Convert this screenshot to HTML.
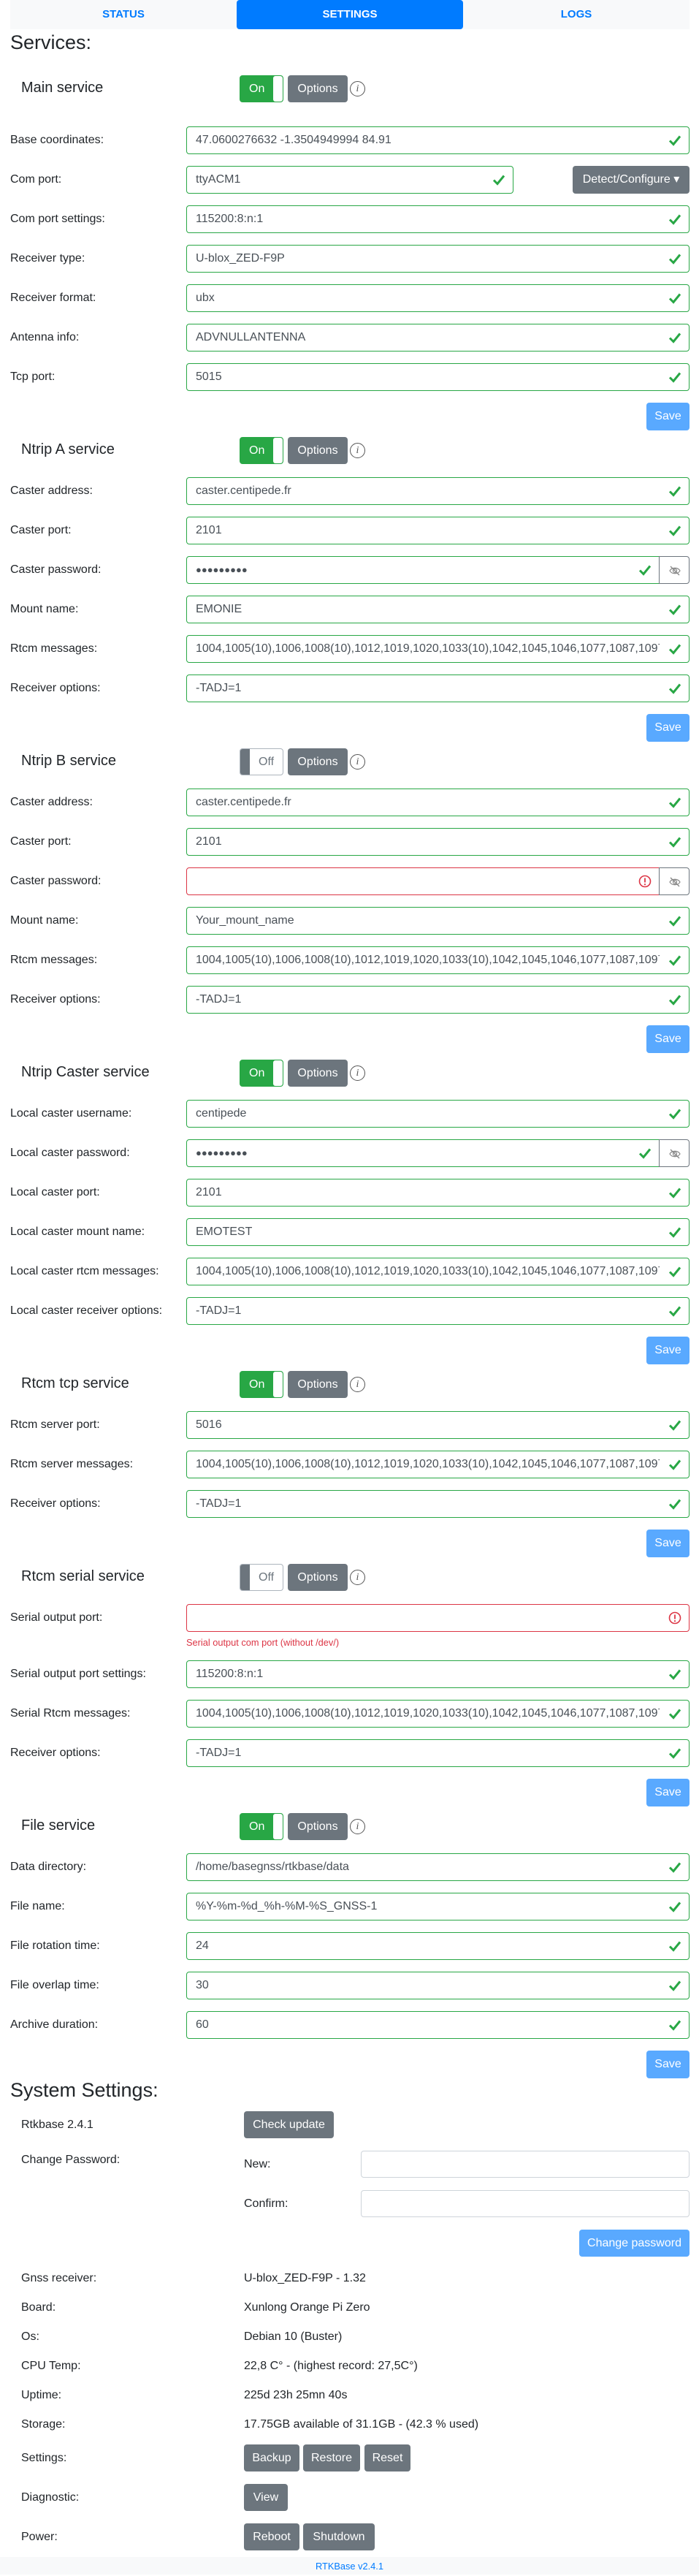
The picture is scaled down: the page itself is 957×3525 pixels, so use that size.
<!DOCTYPE html>
<html><head><meta charset="utf-8">
<style>
*{box-sizing:border-box;margin:0;padding:0}
body{width:957px;height:3523px;position:relative;background:#fff;font-family:"Liberation Sans",sans-serif;color:#212529;font-size:16px;overflow:hidden}
.nav{position:absolute;left:14px;top:0;width:930px;height:40px;background:#f8f9fa}
.tab{position:absolute;top:0;height:40px;width:310px;text-align:center;line-height:40px;font-weight:bold;font-size:15px;color:#007bff}
.tab.act{background:#007bff;color:#fff;border-radius:4px}
h3{position:absolute;left:14px;font-size:27px;font-weight:normal;line-height:32px}
.sec{position:absolute;left:0;width:957px}
.hdr{position:relative;height:37px;margin-bottom:18px}
.hdr .t{position:absolute;left:29px;top:0;line-height:34px;font-size:20px}
.tg{position:absolute;left:328px;top:0;width:60px;height:37px;border-radius:4px;overflow:hidden}
.tg.on{background:#28a745;border:1px solid #28a745}
.tg.on span{position:absolute;left:12px;top:0;line-height:35px;color:#fff}
.tg.on i{position:absolute;right:0;top:0;width:13px;height:35px;background:#fff;border-radius:3px}
.tg.off{background:#fff;border:1px solid #adb5bd}
.tg.off i{position:absolute;left:0;top:0;width:13px;height:35px;background:#6c757d}
.tg.off span{position:absolute;left:25px;top:0;line-height:35px;color:#6c757d}
.opt{position:absolute;left:394px;top:0;width:82px;height:37px;background:#6c757d;color:#fff;border-radius:4px;text-align:center;line-height:37px}
.inf{position:absolute;left:479px;top:8px;width:21px;height:21px;border:1.3px solid #555;border-radius:50%;text-align:center;font:italic 14px/19px "Liberation Serif",serif;color:#555}
.row{position:relative;height:38px;margin-bottom:16px}
.row label{position:absolute;left:14px;top:0;line-height:38px;white-space:nowrap}
.in{position:absolute;left:255px;top:0;width:689px;height:38px;border:1px solid #28a745;border-radius:4px;padding:0 40px 0 12px;line-height:36px;color:#495057;white-space:nowrap}
.in b{display:block;font-weight:normal;overflow:hidden;white-space:nowrap}
.in.bad{border-color:#dc3545}
.ck{position:absolute;right:10px;top:10px;width:18px;height:16px}
.pw{width:648px;border-radius:4px 0 0 4px}
.eye{position:absolute;left:902px;top:0;width:42px;height:38px;border:1px solid #6c757d;border-radius:0 4px 4px 0}
.eye svg{position:absolute;left:13px;top:11px}
.sv{position:relative;margin-left:885px;width:59px;height:38px;background:#59a9ff;color:#fff;border-radius:4px;text-align:center;line-height:38px}
.err{position:absolute;left:255px;font-size:12.8px;color:#dc3545}
.sl{position:absolute;left:29px;line-height:20px}
.sv2{position:absolute;left:334px;line-height:20px}
.btn{position:absolute;height:37px;background:#6c757d;color:#fff;border-radius:4px;text-align:center;line-height:37px}
.pin{position:absolute;left:494px;width:450px;height:37px;border:1px solid #ced4da;border-radius:4px}
.dots{letter-spacing:0;font-size:13px;color:#495057}
</style></head><body>
<svg width="0" height="0" style="position:absolute"><defs>
<symbol id="ck" viewBox="0 0 18 16"><path d="M2 8.5 L7 13.5 L16 2.5" fill="none" stroke="#28a745" stroke-width="3"/></symbol>
<symbol id="ex" viewBox="0 0 18 18"><circle cx="9" cy="9" r="7.5" fill="none" stroke="#dc3545" stroke-width="1.6"/><path d="M9 4.5 V10.5" stroke="#dc3545" stroke-width="1.8"/><circle cx="9" cy="13.2" r="1.1" fill="#dc3545"/></symbol>
<symbol id="eye" viewBox="0 0 16 16"><path d="M1 8 C4 3 12 3 15 8 C12 13 4 13 1 8Z" fill="none" stroke="#888" stroke-width="1.2"/><circle cx="8" cy="8" r="2.5" fill="none" stroke="#888" stroke-width="1.2"/><path d="M2 2 L14 14" stroke="#888" stroke-width="1.3"/></symbol>
</defs></svg>

<div class="nav">
<div class="tab" style="left:0">STATUS</div>
<div class="tab act" style="left:310px">SETTINGS</div>
<div class="tab" style="left:620px">LOGS</div>
</div>
<h3 style="top:42px">Services:</h3>

<div class="sec" style="top:103px">
<div class="hdr" style="margin-bottom:33px"><div class="t">Main service</div><div class="tg on"><span>On</span><i></i></div><div class="opt">Options</div><div class="inf">i</div></div>
<div class="row"><label>Base coordinates:</label><div class="in">47.0600276632 -1.3504949994 84.91<svg class="ck"><use href="#ck"/></svg></div></div>
<div class="row"><label>Com port:</label><div class="in" style="width:448px">ttyACM1<svg class="ck"><use href="#ck"/></svg></div><div class="btn" style="left:784px;width:160px;height:38px;line-height:38px">Detect/Configure ▾</div></div>
<div class="row"><label>Com port settings:</label><div class="in">115200:8:n:1<svg class="ck"><use href="#ck"/></svg></div></div>
<div class="row"><label>Receiver type:</label><div class="in">U-blox_ZED-F9P<svg class="ck"><use href="#ck"/></svg></div></div>
<div class="row"><label>Receiver format:</label><div class="in">ubx<svg class="ck"><use href="#ck"/></svg></div></div>
<div class="row"><label>Antenna info:</label><div class="in">ADVNULLANTENNA<svg class="ck"><use href="#ck"/></svg></div></div>
<div class="row"><label>Tcp port:</label><div class="in">5015<svg class="ck"><use href="#ck"/></svg></div></div>
<div class="sv">Save</div>
</div>

<div class="sec" style="top:598px">
<div class="hdr"><div class="t">Ntrip A service</div><div class="tg on"><span>On</span><i></i></div><div class="opt">Options</div><div class="inf">i</div></div>
<div class="row"><label>Caster address:</label><div class="in">caster.centipede.fr<svg class="ck"><use href="#ck"/></svg></div></div>
<div class="row"><label>Caster port:</label><div class="in">2101<svg class="ck"><use href="#ck"/></svg></div></div>
<div class="row"><label>Caster password:</label><div class="in pw"><span class="dots">●●●●●●●●●</span><svg class="ck"><use href="#ck"/></svg></div><div class="eye"><svg width="16" height="16"><use href="#eye"/></svg></div></div>
<div class="row"><label>Mount name:</label><div class="in">EMONIE<svg class="ck"><use href="#ck"/></svg></div></div>
<div class="row"><label>Rtcm messages:</label><div class="in"><b>1004,1005(10),1006,1008(10),1012,1019,1020,1033(10),1042,1045,1046,1077,1087,1097,1107,1127,1230</b><svg class="ck"><use href="#ck"/></svg></div></div>
<div class="row"><label>Receiver options:</label><div class="in">-TADJ=1<svg class="ck"><use href="#ck"/></svg></div></div>
<div class="sv">Save</div>
</div>

<div class="sec" style="top:1024px">
<div class="hdr"><div class="t">Ntrip B service</div><div class="tg off"><i></i><span>Off</span></div><div class="opt">Options</div><div class="inf">i</div></div>
<div class="row"><label>Caster address:</label><div class="in">caster.centipede.fr<svg class="ck"><use href="#ck"/></svg></div></div>
<div class="row"><label>Caster port:</label><div class="in">2101<svg class="ck"><use href="#ck"/></svg></div></div>
<div class="row"><label>Caster password:</label><div class="in pw bad"><svg class="ck" style="width:18px;height:18px;top:9px"><use href="#ex"/></svg></div><div class="eye"><svg width="16" height="16"><use href="#eye"/></svg></div></div>
<div class="row"><label>Mount name:</label><div class="in">Your_mount_name<svg class="ck"><use href="#ck"/></svg></div></div>
<div class="row"><label>Rtcm messages:</label><div class="in"><b>1004,1005(10),1006,1008(10),1012,1019,1020,1033(10),1042,1045,1046,1077,1087,1097,1107,1127,1230</b><svg class="ck"><use href="#ck"/></svg></div></div>
<div class="row"><label>Receiver options:</label><div class="in">-TADJ=1<svg class="ck"><use href="#ck"/></svg></div></div>
<div class="sv">Save</div>
</div>

<div class="sec" style="top:1450px">
<div class="hdr"><div class="t">Ntrip Caster service</div><div class="tg on"><span>On</span><i></i></div><div class="opt">Options</div><div class="inf">i</div></div>
<div class="row"><label>Local caster username:</label><div class="in">centipede<svg class="ck"><use href="#ck"/></svg></div></div>
<div class="row"><label>Local caster password:</label><div class="in pw"><span class="dots">●●●●●●●●●</span><svg class="ck"><use href="#ck"/></svg></div><div class="eye"><svg width="16" height="16"><use href="#eye"/></svg></div></div>
<div class="row"><label>Local caster port:</label><div class="in">2101<svg class="ck"><use href="#ck"/></svg></div></div>
<div class="row"><label>Local caster mount name:</label><div class="in">EMOTEST<svg class="ck"><use href="#ck"/></svg></div></div>
<div class="row"><label>Local caster rtcm messages:</label><div class="in"><b>1004,1005(10),1006,1008(10),1012,1019,1020,1033(10),1042,1045,1046,1077,1087,1097,1107,1127,1230</b><svg class="ck"><use href="#ck"/></svg></div></div>
<div class="row"><label>Local caster receiver options:</label><div class="in">-TADJ=1<svg class="ck"><use href="#ck"/></svg></div></div>
<div class="sv">Save</div>
</div>

<div class="sec" style="top:1876px">
<div class="hdr"><div class="t">Rtcm tcp service</div><div class="tg on"><span>On</span><i></i></div><div class="opt">Options</div><div class="inf">i</div></div>
<div class="row"><label>Rtcm server port:</label><div class="in">5016<svg class="ck"><use href="#ck"/></svg></div></div>
<div class="row"><label>Rtcm server messages:</label><div class="in"><b>1004,1005(10),1006,1008(10),1012,1019,1020,1033(10),1042,1045,1046,1077,1087,1097,1107,1127,1230</b><svg class="ck"><use href="#ck"/></svg></div></div>
<div class="row"><label>Receiver options:</label><div class="in">-TADJ=1<svg class="ck"><use href="#ck"/></svg></div></div>
<div class="sv">Save</div>
</div>

<div class="sec" style="top:2140px">
<div class="hdr"><div class="t">Rtcm serial service</div><div class="tg off"><i></i><span>Off</span></div><div class="opt">Options</div><div class="inf">i</div></div>
<div class="row" style="margin-bottom:39px"><label>Serial output port:</label><div class="in bad"><svg class="ck" style="width:18px;height:18px;top:9px"><use href="#ex"/></svg></div><div class="err" style="top:45px">Serial output com port (without /dev/)</div></div>
<div class="row"><label>Serial output port settings:</label><div class="in">115200:8:n:1<svg class="ck"><use href="#ck"/></svg></div></div>
<div class="row"><label>Serial Rtcm messages:</label><div class="in"><b>1004,1005(10),1006,1008(10),1012,1019,1020,1033(10),1042,1045,1046,1077,1087,1097,1107,1127,1230</b><svg class="ck"><use href="#ck"/></svg></div></div>
<div class="row"><label>Receiver options:</label><div class="in">-TADJ=1<svg class="ck"><use href="#ck"/></svg></div></div>
<div class="sv">Save</div>
</div>

<div class="sec" style="top:2481px">
<div class="hdr"><div class="t">File service</div><div class="tg on"><span>On</span><i></i></div><div class="opt">Options</div><div class="inf">i</div></div>
<div class="row"><label>Data directory:</label><div class="in">/home/basegnss/rtkbase/data<svg class="ck"><use href="#ck"/></svg></div></div>
<div class="row"><label>File name:</label><div class="in">%Y-%m-%d_%h-%M-%S_GNSS-1<svg class="ck"><use href="#ck"/></svg></div></div>
<div class="row"><label>File rotation time:</label><div class="in">24<svg class="ck"><use href="#ck"/></svg></div></div>
<div class="row"><label>File overlap time:</label><div class="in">30<svg class="ck"><use href="#ck"/></svg></div></div>
<div class="row"><label>Archive duration:</label><div class="in">60<svg class="ck"><use href="#ck"/></svg></div></div>
<div class="sv">Save</div>
</div>

<h3 style="top:2844px">System Settings:</h3>
<div class="sl" style="top:2898px">Rtkbase 2.4.1</div>
<div class="btn" style="left:334px;top:2889px;width:123px">Check update</div>
<div class="sl" style="top:2946px">Change Password:</div>
<div class="sv2" style="top:2952px">New:</div>
<div class="pin" style="top:2943px"></div>
<div class="sv2" style="top:3006px">Confirm:</div>
<div class="pin" style="top:2997px"></div>
<div class="btn" style="left:793px;top:3051px;width:151px;background:#59a9ff">Change password</div>
<div class="sl" style="top:3108px">Gnss receiver:</div><div class="sv2" style="top:3108px">U-blox_ZED-F9P - 1.32</div>
<div class="sl" style="top:3148px">Board:</div><div class="sv2" style="top:3148px">Xunlong Orange Pi Zero</div>
<div class="sl" style="top:3188px">Os:</div><div class="sv2" style="top:3188px">Debian 10 (Buster)</div>
<div class="sl" style="top:3228px">CPU Temp:</div><div class="sv2" style="top:3228px">22,8 C° - (highest record: 27,5C°)</div>
<div class="sl" style="top:3268px">Uptime:</div><div class="sv2" style="top:3268px">225d 23h 25mn 40s</div>
<div class="sl" style="top:3308px">Storage:</div><div class="sv2" style="top:3308px">17.75GB available of 31.1GB - (42.3 % used)</div>
<div class="sl" style="top:3354px">Settings:</div>
<div class="btn" style="left:334px;top:3345px;width:76px">Backup</div>
<div class="btn" style="left:415px;top:3345px;width:78px">Restore</div>
<div class="btn" style="left:499px;top:3345px;width:63px">Reset</div>
<div class="sl" style="top:3408px">Diagnostic:</div>
<div class="btn" style="left:334px;top:3399px;width:60px">View</div>
<div class="sl" style="top:3462px">Power:</div>
<div class="btn" style="left:334px;top:3453px;width:76px">Reboot</div>
<div class="btn" style="left:415px;top:3453px;width:98px">Shutdown</div>
<div style="position:absolute;left:0;top:3499px;width:957px;height:24px;background:#f8f9fa;text-align:center;font-size:12.8px;line-height:26px;color:#007bff">RTKBase v2.4.1</div>
</body></html>
